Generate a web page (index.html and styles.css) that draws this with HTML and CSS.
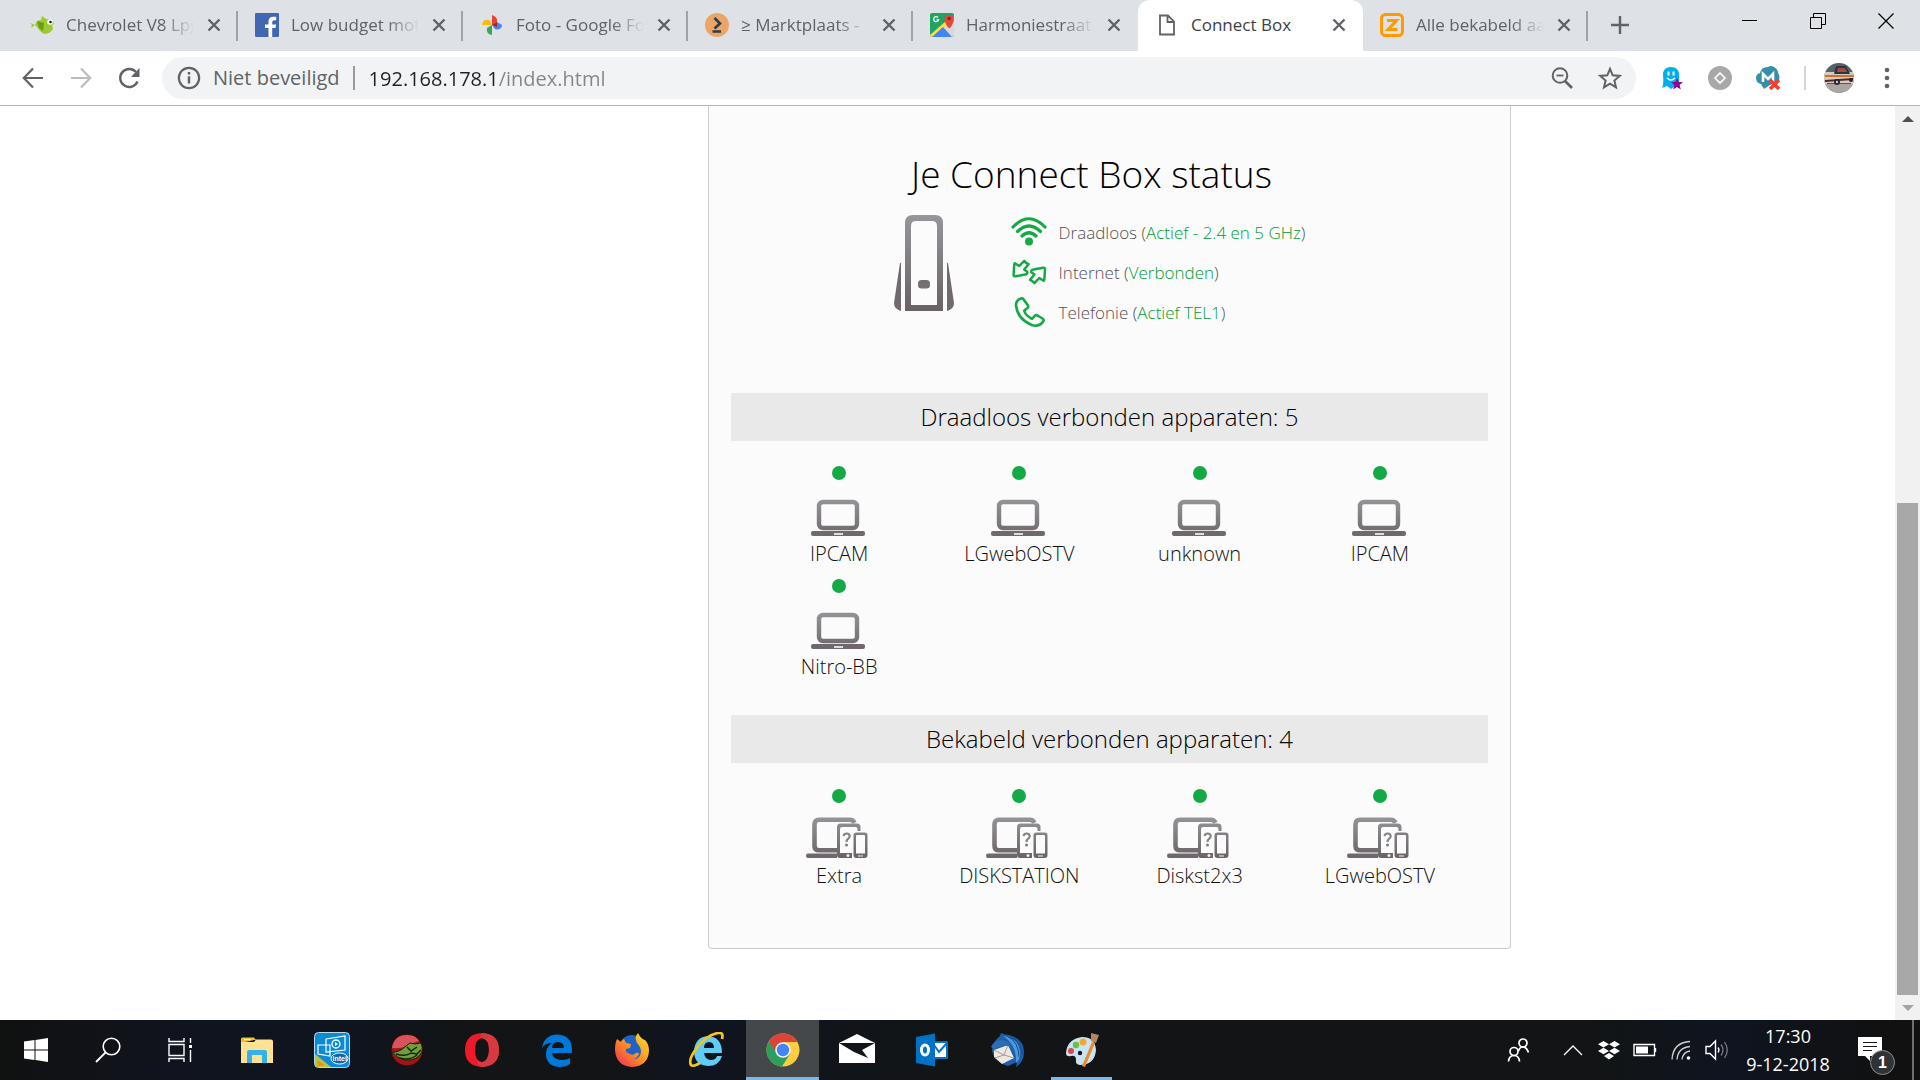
FILE: index.html
```html
<!DOCTYPE html>
<html lang="nl">
<head>
  <meta charset="UTF-8" />
  <meta name="viewport" content="width=device-width, initial-scale=1.0" />
  <title>Connect Box</title>
  <link rel="stylesheet" href="styles.css">
</head>
<body>

  <!-- Shared icons -->
  <svg class="defs" aria-hidden="true">
    <defs>
      <linearGradient id="grey" gradientUnits="userSpaceOnUse" x1="0" y1="0" x2="0" y2="40">
        <stop offset="0" stop-color="#949599" /><stop offset="1" stop-color="#6b6368" />
      </linearGradient>
      <symbol id="close" viewBox="0 0 14 14">
        <path d="M1.5 1.5l11 11M12.5 1.5l-11 11" stroke="#5f6368" stroke-width="2.4" />
      </symbol>
      <symbol id="laptop" viewBox="0 0 56 38">
        <rect x="8" y="3" width="38" height="26" rx="4" fill="none" stroke="url(#grey)" stroke-width="4.4" />
        <rect x="0" y="32" width="54" height="5" rx="2" fill="#6f686d" />
        <rect x="23" y="34" width="9" height="2" fill="#ddd" />
      </symbol>
      <symbol id="devices" viewBox="0 0 62 42">
        <path d="M32 33.200H13q-4.500 0-4.500-4.500V7q0-4.200 4.500-4.200h31q3 0 4.500 3" fill="none" stroke="url(#grey)" stroke-width="4.600" />
        <path d="M2 36.500h29V41H2q-2 0-2-2.200t2-2.300z" fill="#6f686d" />
        <path d="M46 41H34q-3 0-3-3V10q0-3.500 3.500-3.500h16.500q3.500 0 3.500 3.500v4h-3V12q0-2-2-2H36q-2 0-2 2v24h12z" fill="url(#grey)" />
        <circle cx="42" cy="38.500" r="1.500" fill="#eee" />
        <path d="M37.500 19q.5-2.500 3.200-2.500 3 0 3 2.700 0 1.600-1.900 3-1.300 1-1.300 2.800" fill="none" stroke="#858588" stroke-width="2.200" />
        <circle cx="40.500" cy="28" r="1.500" fill="#7c7a7d" />
        <path d="M50.500 15.500h8q3 0 3 3V38q0 3-3 3h-8q-3 0-3-3V18.500q0-3 3-3zm-.500 3.500v17.500h9V19q0-1-1-1h-7q-1 0-1 1z" fill="url(#grey)" fill-rule="evenodd" />
        <path d="M52 39h5" stroke="#ddd" stroke-width="1.200" />
      </symbol>
    </defs>
  </svg>

  <header class="browser">
    <div class="tabstrip">
      <nav class="tabs" aria-label="Tabbladen">
        <div class="tab">
          <svg class="favicon" viewBox="0 0 24 24"><path d="M0 10l5 2 2-4 4-1 1-4 4 3q7 0 8 5l-2 1 1 4q-3 5-9 5l-4-3-3-4-2-2-4 3 1-3z" fill="#9bcb2d"/><path d="M7 8l7 2-1 8-4-3z" fill="#6d9c1d"/><circle cx="20" cy="9" r="2.800" fill="#fff"/><circle cx="20.500" cy="9" r="1.300" fill="#222"/></svg>
          <a href="#">Chevrolet V8 Lpg</a>
          <button type="button" aria-label="Sluiten"><svg><use href="#close"/></svg></button>
        </div>
        <div class="tab">
          <svg class="favicon" viewBox="0 0 24 24"><rect width="24" height="24" rx="1" fill="#4267b2"/><path d="M13.500 24v-9H10v-3.600h3.500V8.500q0-4.700 4.700-4.700h3V7.300h-2q-2 0-2 2v2.100h3.900l-.6 3.600h-3.300v9z" fill="#fff"/></svg>
          <a href="#">Low budget mot</a>
          <button type="button" aria-label="Sluiten"><svg><use href="#close"/></svg></button>
        </div>
        <div class="tab">
          <svg class="favicon" viewBox="0 0 24 24"><path d="M12 12V2q6 2 5 7z" fill="#ea4335"/><path d="M12 12l5-3 5 3v1q-2 5-7 3z" fill="#4285f4"/><path d="M12 12v10q-6-1-5-7z" fill="#34a853"/><path d="M12 12H2q1-6 7-5z" fill="#fbbc04"/><path d="M12 12l5-3v5z" fill="#a52714"/></svg>
          <a href="#">Foto - Google Fo</a>
          <button type="button" aria-label="Sluiten"><svg><use href="#close"/></svg></button>
        </div>
        <div class="tab">
          <svg class="favicon" viewBox="0 0 24 24"><circle cx="12" cy="12" r="12" fill="#eda566"/><path d="M9.500 5l5.500 5.500-5.500 5M7.500 18.500h8.500" fill="none" stroke="#2d3c4d" stroke-width="2.600"/></svg>
          <a href="#">≥ Marktplaats -</a>
          <button type="button" aria-label="Sluiten"><svg><use href="#close"/></svg></button>
        </div>
        <div class="tab">
          <svg class="favicon" viewBox="0 0 24 24"><rect width="24" height="24" rx="2" fill="#1fa463"/><path d="M2 24L24 4v18q0 2-2 2z" fill="#d8d8d8"/><path d="M0 22L16 8l2 4L4 24H2q-2 0-2-2z" fill="#ffdc48"/><path d="M2 24l11-10 9 10z" fill="#4285f4"/><path d="M18.500 15q-4-5-4-9.500a5 5 0 0 1 9.500 0q0 4.500-4 9.500z" fill="#e8453c"/><circle cx="19.200" cy="5.500" r="1.800" fill="#8c231b"/><path d="M8 4.500A2.500 2.500 0 1 0 8.500 7H6.500" fill="none" stroke="#fff" stroke-width="1.300"/></svg>
          <a href="#">Harmoniestraat</a>
          <button type="button" aria-label="Sluiten"><svg><use href="#close"/></svg></button>
        </div>
        <div class="tab active">
          <svg class="favicon" viewBox="0 0 24 24"><path d="M5 2.500h8l6 6V21.500H5zM12.500 2.500V9H19" fill="none" stroke="#5f6368" stroke-width="1.800"/></svg>
          <a href="#">Connect Box</a>
          <button type="button" aria-label="Sluiten"><svg><use href="#close"/></svg></button>
        </div>
        <div class="tab">
          <svg class="favicon" viewBox="0 0 24 24"><rect x="1.500" y="1.500" width="21" height="21" rx="4" fill="none" stroke="#ff9a00" stroke-width="3"/><path d="M7 7.500h9.500L8 16.500h9.500" fill="none" stroke="#ff9a00" stroke-width="3"/></svg>
          <a href="#">Alle bekabeld aa</a>
          <button type="button" aria-label="Sluiten"><svg><use href="#close"/></svg></button>
        </div>
        <button class="new-tab" type="button" aria-label="Nieuw tabblad"><svg viewBox="0 0 18 18"><path d="M9 0v18M0 9h18" stroke="#5f6368" stroke-width="2.400"/></svg></button>
      </nav>
      <div class="window-buttons">
        <button type="button" aria-label="Minimaliseren"><svg viewBox="0 0 16 16"><path d="M0 7.500h15" stroke="#000"/></svg></button>
        <button type="button" aria-label="Verkleinen"><svg viewBox="0 0 16 16"><path d="M.5 4.500h11v11H.5zM3.500 4V.5h12v11H12" fill="none" stroke="#000"/></svg></button>
        <button type="button" aria-label="Venster sluiten"><svg viewBox="0 0 16 16"><path d="M.5 .5l15 15M15.500 .5l-15 15" stroke="#000" stroke-width="1.200"/></svg></button>
      </div>
    </div>

    <div class="toolbar">
      <div class="nav-buttons">
        <button type="button" aria-label="Terug"><svg viewBox="0 0 24 24"><path d="M22 12H3M12 2.500L2.800 12l9.200 9.500" fill="none" stroke="#5f6368" stroke-width="2.200"/></svg></button>
        <button type="button" aria-label="Vooruit" disabled><svg viewBox="0 0 24 24"><path d="M2 12h19M12 2.500l9.200 9.500-9.200 9.500" fill="none" stroke="#babcbe" stroke-width="2.200"/></svg></button>
        <button type="button" aria-label="Vernieuwen"><svg viewBox="0 0 24 24"><path d="M20.500 15.500A9 9 0 1 1 19 6" fill="none" stroke="#5f6368" stroke-width="2.400"/><path d="M22.500 2v9H14z" fill="#5f6368"/></svg></button>
      </div>
      <div class="omnibox">
        <svg class="info" viewBox="0 0 22 22"><circle cx="11" cy="11" r="9.300" fill="none" stroke="#5f6368" stroke-width="2"/><path d="M11 9.500v6.500M11 5.500v2.300" stroke="#5f6368" stroke-width="2.200"/></svg>
        <label for="url">Niet beveiligd</label>
        <input id="url" type="text" value="192.168.178.1/index.html" spellcheck="false">
        <button type="button" aria-label="Zoomen"><svg viewBox="0 0 24 24"><circle cx="10" cy="9.500" r="7.300" fill="none" stroke="#5f6368" stroke-width="2"/><path d="M6.500 9.500h7" stroke="#5f6368" stroke-width="1.800"/><path d="M15 15l7 7" stroke="#5f6368" stroke-width="2.600"/></svg></button>
        <button type="button" aria-label="Bladwijzer"><svg viewBox="0 0 24 24"><path d="M12 2.800l2.700 6.500 7 .6-5.300 4.600 1.600 6.800-6-3.600-6 3.600 1.600-6.800L2.300 9.900l7-.6z" fill="none" stroke="#5f6368" stroke-width="2"/></svg></button>
      </div>
      <div class="extensions">
        <button type="button" aria-label="Ghostery"><svg viewBox="0 0 24 24"><path d="M3 9Q3 1 11 1t8 8v13l-4-2-4 3-4-3-5 2q2-4 1-13z" fill="#00aef0"/><path d="M8.500 5.500v4M13.500 5.500v4" stroke="#fff" stroke-width="2"/><path d="M7 12q4 4 8 0" fill="none" stroke="#fff" stroke-width="1.500"/><path d="M17 12l1.600 4 4.400.3-3.400 2.800 1.200 4.400-3.800-2.400-3.800 2.400 1.200-4.400-3.400-2.800 4.400-.3z" fill="#930095"/></svg></button>
        <button type="button" aria-label="Extensie"><svg viewBox="0 0 24 24"><circle cx="12" cy="12" r="12" fill="#a8a8a8"/><path d="M12 7l5 5-5 5-5-5z" fill="none" stroke="#fff" stroke-width="1.700"/></svg></button>
        <button type="button" aria-label="MeldMij"><svg viewBox="0 0 24 24"><path d="M5 18q-5-1-5-6 0-4 4-5 1-6 8-6 3-2 6 0 4 2 4 6 3 4 0 9l-8 3-6 4z" fill="#3390a8"/><path d="M7 16V8l5 5 5-5v8" fill="none" stroke="#fff" stroke-width="2.600"/><path d="M14 14l9 9M23 14l-9 9" stroke="#fb3c2a" stroke-width="3.500"/></svg></button>
      </div>
      <div class="profile">
        <button type="button" aria-label="Profiel"><svg viewBox="0 0 30 30"><clipPath id="round"><circle cx="15" cy="15" r="15"/></clipPath><g clip-path="url(#round)"><path fill="#55606b" d="M0 0h30v30H0z"/><path fill="#d9cabd" d="M0 9h30v13H0z"/><path fill="#a9a6a3" d="M0 21h30v9H0z"/><path d="M12 3h10l4 8H10z" fill="#293545"/><path d="M14 5h7l2 4H13z" fill="#a64a40"/><path d="M1 12h29v2H1z" fill="#cc732b"/><path d="M1 17l28-2v2L1 19z" fill="#4d2b2e"/><path d="M3 20h24v1H3z" fill="#a43a25"/><circle cx="13" cy="19" r="3" fill="#292033"/><circle cx="13" cy="19" r="1.200" fill="#ccc"/><circle cx="27" cy="17" r="2" fill="#292033"/></g></svg></button>
        <button type="button" aria-label="Menu"><svg viewBox="0 0 30 30"><circle cx="15" cy="7" r="2.300" fill="#5f6368"/><circle cx="15" cy="15" r="2.300" fill="#5f6368"/><circle cx="15" cy="23" r="2.300" fill="#5f6368"/></svg></button>
      </div>
    </div>
  </header>

  <div class="viewport">
    <main class="page">
      <section class="card">
        <h1>Je Connect Box status</h1>
        <div class="status">
          <svg class="router" viewBox="0 0 60 97">
            <linearGradient id="body" x1="0" y1="0" x2="0" y2="1"><stop offset="0" stop-color="#96979b"/><stop offset="1" stop-color="#696165"/></linearGradient>
            <path d="M19 0h22q8 0 8 8v88H11V8q0-8 8-8zm3 6q-5 0-5 5v79h26V11q0-5-5-5z" fill="url(#body)" fill-rule="evenodd"/>
            <rect x="24" y="65" width="12" height="8.500" rx="3.500" fill="#746f73"/>
            <path d="M6 48h1v48q-7-2-7-8zM54 48h-1v48q7-2 7-8z" fill="#70696d"/>
          </svg>
          <ul>
            <li>
              <svg viewBox="0 0 36 32"><g fill="none" stroke="#14a944" stroke-width="3.200" stroke-linecap="round"><path d="M2 11Q18-5.500 34 11M6.500 15.500q11.500-11 23 0M11 20q7-6.500 14 0"/></g><circle cx="18" cy="25.500" r="4" fill="#14a944"/></svg>
              <span>Draadloos (<b>Actief - 2.4 en 5 GHz</b>)</span>
            </li>
            <li>
              <svg viewBox="0 0 36 32"><g fill="none" stroke="#14a944" stroke-width="2.500" stroke-linejoin="round"><path id="arrow" d="M4 7.300l4.300 2.700 5-5.200q1.200 2 4.200 3.400l-4.300 5.300 3 2.200q.5 2.600-2 2.900l-9.700 1.700q-2 .3-1.900-1.600l.6-9.800q.1-1.500.8-1.600z"/><use href="#arrow" transform="rotate(180 18.300 16)"/></g></svg>
              <span>Internet (<b>Verbonden</b>)</span>
            </li>
            <li>
              <svg viewBox="0 0 36 32"><path d="M10 2.500q-5 1.500-5 7 1.500 13.500 15.500 19.500 8 2.500 12-4 .5-1.500-1-2.500l-5-3q-2-1-3 .5l-2 2.500q-1 .5-2-.5-5-3-6-6.500-.5-1 .5-1.500l2.500-2q1-1 .5-2.500L13 4q-1-2-3-1.500z" fill="none" stroke="#14a944" stroke-width="2.600" stroke-linejoin="round"/></svg>
              <span>Telefonie (<b>Actief TEL1</b>)</span>
            </li>
          </ul>
        </div>

        <h2>Draadloos verbonden apparaten: 5</h2>
        <ul class="devices">
          <li><i></i><svg><use href="#laptop"/></svg><span>IPCAM</span></li>
          <li><i></i><svg><use href="#laptop"/></svg><span>LGwebOSTV</span></li>
          <li><i></i><svg><use href="#laptop"/></svg><span>unknown</span></li>
          <li><i></i><svg><use href="#laptop"/></svg><span>IPCAM</span></li>
          <li><i></i><svg><use href="#laptop"/></svg><span>Nitro-BB</span></li>
        </ul>

        <h2>Bekabeld verbonden apparaten: 4</h2>
        <ul class="devices wired">
          <li><i></i><svg><use href="#devices"/></svg><span>Extra</span></li>
          <li><i></i><svg><use href="#devices"/></svg><span>DISKSTATION</span></li>
          <li><i></i><svg><use href="#devices"/></svg><span>Diskst2x3</span></li>
          <li><i></i><svg><use href="#devices"/></svg><span>LGwebOSTV</span></li>
        </ul>
      </section>
    </main>
    <div class="scrollbar">
      <button type="button" aria-label="Omhoog"><svg viewBox="0 0 12 6"><path d="M0 6l6-6 6 6z" fill="#505050"/></svg></button>
      <div class="track"><div class="thumb"></div></div>
      <button type="button" aria-label="Omlaag"><svg viewBox="0 0 12 6"><path d="M0 0l6 6 6-6z" fill="#a3a3a3"/></svg></button>
    </div>
  </div>

  <footer class="taskbar">
    <div class="system">
      <button type="button" aria-label="Start"><svg viewBox="0 0 36 36"><path d="M6 9.500l10.500-1.500v9.500H6zM17.500 7.900L30 6v11.500H17.500zM6 18.500h10.500V28L6 26.500zM17.500 18.500H30V30l-12.500-1.900z" fill="#fff"/></svg></button>
      <button type="button" aria-label="Zoeken"><svg viewBox="0 0 36 36"><circle cx="21.500" cy="14.500" r="8.300" fill="none" stroke="#fff" stroke-width="1.600"/><path d="M15.500 20.500L6 30" stroke="#fff" stroke-width="1.800"/></svg></button>
      <button type="button" aria-label="Taakweergave"><svg viewBox="0 0 36 36"><path d="M7 6v3.500h15V6M7 30v-3.500h15V30M7 12.500h15v11H7zM28.500 6v5M28.500 18v12" fill="none" stroke="#fff" stroke-width="1.400"/><path d="M27 13h3v3h-3z" fill="#fff"/></svg></button>
    </div>
    <div class="apps">
      <button type="button" aria-label="Verkenner"><svg viewBox="0 0 36 36"><path d="M2 7q0-1.500 1.500-1.500H15L17 8h-2L2 11z" fill="#f5b92d"/><path d="M5 7.500h7" stroke="#fff" stroke-width="1.200"/><path d="M2 10h13l2-2.500h15q2 0 2 2V31H2z" fill="#ffe292"/><path d="M8 31V20q0-2 2-2h16q2 0 2 2v11h-5v-8H13v8z" fill="#34b1ea"/></svg></button>
      <button type="button" aria-label="Intel"><svg viewBox="0 0 36 36"><rect x=".5" y=".5" width="35" height="35" rx="4" fill="#0a8bd6" stroke="#bcd9e8"/><path d="M1 22l16 13H4q-3 0-3-3z" fill="#b9c63b"/><path d="M3 28l8 5-7 1z" fill="#ef8a24"/><path d="M12 7l19-3v14l-19 2zM4 13h12v11L4 22z" fill="none" stroke="#fff" stroke-width="1.200"/><circle cx="22" cy="12" r="4" fill="none" stroke="#fff" stroke-width="1.300"/><path d="M21 10l3 2-3 2z" fill="#fff"/><ellipse cx="25.500" cy="26.500" rx="8.500" ry="5.500" fill="#0868b0" stroke="#fff"/><text x="18.500" y="29" class="intel">intel</text></svg></button>
      <button type="button" aria-label="Kikker"><svg viewBox="0 0 36 36"><circle cx="18" cy="18" r="16" fill="#9d151b" stroke="#2c0a0a"/><path d="M3 16Q5 3 18 3q9 0 12 6l-12 4q-4 4-15 3z" fill="#d8545a"/><path d="M17 14l4-3 5 1 6-1q2 4 1 9-5 9-17 8Q8 26 3 20q7 1 14-6z" fill="#6fa03a" stroke="#16240d"/><path d="M7 22q10 3 15-1l6 1 4-4M18 15l4 4 6-4M11 26q9 3 17-3" fill="none" stroke="#16240d" stroke-width="1.500"/></svg></button>
      <button type="button" aria-label="Opera"><svg viewBox="0 0 36 36"><path d="M18 1q17 1 17 17T18 35Q1 34 1 18T18 1zm0 5q-7 1-7 12t7 12q7-1 7-12T18 6z" fill="#f0192c" fill-rule="evenodd"/><path d="M18 1q17 1 17 17T18 35q-4-1-5-7 4 4 8 1 4-4 4-11 0-12-9-12z" fill="#d63a40"/></svg></button>
      <button type="button" aria-label="Edge"><svg viewBox="0 0 36 36"><path d="M3 16Q5 3 18 2.500 33 3 33 18v3H13q1 7 10 7 5 0 8-2v6q-4 3-11 3Q7 34 7 22q0-7 6-11Q6 11 3 16zm10 0h12q0-6-6-6t-6 6z" fill="#0078d7" fill-rule="evenodd"/></svg></button>
      <button type="button" aria-label="Firefox"><svg viewBox="0 0 36 36"><defs><linearGradient id="fox" x1="1" y1="0" x2="0" y2="1"><stop offset="0" stop-color="#ffe23a"/><stop offset=".45" stop-color="#ff9b1c"/><stop offset="1" stop-color="#f0245c"/></linearGradient></defs><circle cx="18" cy="16" r="13" fill="#1f62c8"/><path d="M3 7l4 3q2-3 3-3l2 4 5 1-1 4-4 1v3l4 2q3 2 6-1 3-1 3 1-2 5-7 5 8 1 9-7 0-5-4-9-3-6 1-10 3 6 7 7 4 4 4 11-1 15-17 16Q2 34 1 18 1 11 3 7z" fill="url(#fox)"/></svg></button>
      <button type="button" aria-label="Internet Explorer"><svg viewBox="0 0 36 36"><path d="M5 19Q6 5 19 4q14 1 14 17H15q1 7 7 7 5 0 6-4h5q-3 10-14 10Q5 33 5 19zm10-3h10q0-6-5-6t-5 6z" fill="#5fcdf5" fill-rule="evenodd"/><path d="M11 31q-7 4-9 2Q-1 28 7 17 17 3 29 1q6-1 4 6" fill="none" stroke="#f5c51c" stroke-width="2.700"/></svg></button>
      <button class="current" type="button" aria-label="Chrome"><svg viewBox="0 0 36 36"><circle cx="18" cy="18" r="16.500" fill="#ffcd40"/><path d="M18 18L3.700 9.500A16.500 16.500 0 0 0 17 34.500L25 22z" fill="#2c9f5d"/><path d="M18 10h14.500A16.500 16.500 0 0 0 4 9.200L11 21z" fill="#db4437"/><circle cx="18" cy="18" r="7.800" fill="#f1f1f1"/><circle cx="18" cy="18" r="6.200" fill="#4285f4"/></svg></button>
      <button type="button" aria-label="Mail"><svg viewBox="0 0 36 36"><path d="M0 11l18-9 18 9v20H0zM0 11l15 9 14 6-6-8 13-7z" fill="#fff" fill-rule="evenodd"/></svg></button>
      <button type="button" aria-label="Outlook"><svg viewBox="0 0 36 36"><path d="M18 9h15q1 0 1 1v16q0 1-1 1H18z" fill="#0072c6"/><path d="M20 11h12v14H20z" fill="#fff"/><path d="M20 13l5 7 8-9" fill="none" stroke="#0072c6" stroke-width="2"/><path d="M2 5l19-3.500v33L2 31z" fill="#0072c6"/><ellipse cx="11" cy="18" rx="3.500" ry="5" fill="none" stroke="#fff" stroke-width="3"/></svg></button>
      <button type="button" aria-label="Thunderbird"><svg viewBox="0 0 36 36"><path d="M11 4l1-3q4 2 8 2 15 4 15 17 0 10-8 15l1-5-9 4Q5 30 3 19q0-9 8-15z" fill="#1f5fa9"/><path d="M14 4q15 2 17 15 1 8-4 12 1-18-13-27z" fill="#4a9bdd"/><path d="M22 5q11 5 11 17M18 4q12 6 12 21" fill="none" stroke="#16498c"/><path d="M5 18l14-5 6 13-12 6-8-7z" fill="#eee8e0"/><path d="M5 18l10 5 4-10M6 26l9-3 10 3" fill="none" stroke="#a39c96"/><path d="M2 15Q7 4 19 10l3 5-7-2-10 4z" fill="#2c6db5"/></svg></button>
      <button class="open" type="button" aria-label="Paint"><svg viewBox="0 0 36 36"><path d="M2 21Q3 7 18 5q13 0 14 13-1 14-15 15-6 0-5-5 0-5-5-4-5 1-5-3z" fill="#c8e4f4"/><circle cx="7" cy="19" r="3" fill="#d94a3d"/><circle cx="12" cy="13" r="3.200" fill="#6bbf46"/><circle cx="19" cy="10" r="3.500" fill="#f7a72b"/><circle cx="16" cy="21" r="2.200" fill="#14171c"/><path d="M28 10l3 1-10 24-3-1z" fill="#ea8b2f"/><path d="M27 1l8 2-3 8-5-2z" fill="#b58661"/></svg></button>
    </div>
    <div class="tray">
      <button type="button" aria-label="Personen"><svg viewBox="0 0 24 24"><g fill="none" stroke="#fff" stroke-width="1.700"><circle cx="16" cy="5" r="4"/><path d="M11.500 13q1-4 4.500-4t5.500 5.500"/><circle cx="7" cy="13.500" r="4"/><path d="M1.500 23.500Q2 17.500 7 17.500t5.500 6"/></g></svg></button>
      <button type="button" aria-label="Verborgen pictogrammen"><svg viewBox="0 0 24 24"><path d="M3 17l9-9 9 9" fill="none" stroke="#fff" stroke-width="1.400"/></svg></button>
      <button type="button" aria-label="Dropbox"><svg viewBox="0 0 24 24"><path d="M6.500 3l5.500 3.200-5.500 3.300L1 6.200zM17.500 3L23 6.200l-5.500 3.300L12 6.200zM6.500 9.800l5.500 3.300-5.500 3.200L1 13.100zM17.500 9.800l5.500 3.300-5.500 3.200-5.500-3.200zM12 15l5 3-5 3.500L7 18z" fill="#fff"/></svg></button>
      <button type="button" aria-label="Batterij"><svg viewBox="0 0 24 24"><path d="M1 6.500h20.500v11H1zM22.500 10v4" fill="none" stroke="#fff" stroke-width="1.400"/><path d="M3 8.500h12v7H3z" fill="#fff"/></svg></button>
      <button type="button" aria-label="Netwerk"><svg viewBox="0 0 24 24"><g fill="none" stroke="#fff" stroke-width="1.300"><path d="M3 21.500Q4 4.500 21 3.500M8 21.500Q9 9.500 21 8.500M13 21.500q1-7.500 8-8.500" opacity=".8"/></g><circle cx="19.500" cy="20" r="1.800" fill="#fff"/></svg></button>
      <button type="button" aria-label="Volume"><svg viewBox="0 0 24 24"><path d="M1 8.500h4l5.500-5.500v18L5 15.500H1z" fill="none" stroke="#fff" stroke-width="1.400"/><path d="M13 9.500q2 2.500 0 5" fill="none" stroke="#fff" stroke-width="1.300"/><path d="M16 6.500q4 5.500 0 11M19.500 4q5.500 8 0 16" fill="none" stroke="#777b82" stroke-width="1.300"/></svg></button>
      <time datetime="2018-12-09T17:30"><span>17:30</span><span>9-12-2018</span></time>
      <button class="notice" type="button" aria-label="Meldingen"><svg viewBox="0 0 24 26"><path d="M0 0h24v19H12v5l-5-5H0z" fill="#fff"/><path d="M5 5.500h14M5 9.500h14M5 13.500h9" stroke="#14171c" stroke-width="1.200"/></svg><span class="badge">1</span></button>
      <div class="show-desktop"></div>
    </div>
  </footer>

</body>
</html>
```
FILE: styles.css
```css
* {
  box-sizing: border-box;
  margin: 0;
  padding: 0;
}

body {
  font-family: 'Open Sans', 'Noto Sans', sans-serif;
  background: #fff;
  min-height: 100vh;
  display: flex;
  flex-direction: column;
}

ul {
  list-style: none;
}

svg {
  display: block;
  flex: none;
}

button {
  background: none;
  border: none;
  display: flex;
  align-items: center;
  justify-content: center;
}

.defs {
  position: absolute;
  width: 0;
  height: 0;
}

/* --- Browser --- */
.tabstrip {
  display: flex;
  justify-content: space-between;
  height: 51px;
  padding-left: 13px;
  background: #dee1e6;
}

.tabs {
  display: flex;
  flex: 1;
  min-width: 0;
}

.tab {
  display: flex;
  align-items: center;
  flex: 0 1 225px;
  min-width: 0;
  padding: 0 16px 2px 17px;
  background: linear-gradient(#a0a3a7, #a0a3a7) right 11px / 2px 30px no-repeat;
}

.tab .favicon {
  width: 24px;
  height: 24px;
  margin-right: 12px;
}

.tab a {
  flex: 1;
  overflow: hidden;
  white-space: nowrap;
  font-size: 17px;
  color: #5f6368;
  text-decoration: none;
  mask-image: linear-gradient(to right, #000 75%, transparent);
}

.tab button {
  width: 16px;
  height: 24px;
  margin-left: 12px;
}

.tab button svg {
  width: 14px;
  height: 14px;
}

.tab.active {
  background: #fff;
  border-radius: 12px 12px 0 0;
}

.tab.active a {
  color: #3c4043;
  mask-image: none;
}

.tab:nth-child(5) {
  background: none;
}

.new-tab {
  width: 64px;
  padding-bottom: 2px;
}

.new-tab svg {
  width: 18px;
  height: 18px;
}

.window-buttons {
  display: flex;
}

.window-buttons button {
  width: 68px;
  height: 42px;
}

.window-buttons svg {
  width: 16px;
  height: 16px;
}

.toolbar {
  display: flex;
  align-items: center;
  height: 55px;
  border-bottom: 1px solid #b6b4b6;
  padding: 0 18px 0 9px;
}

.nav-buttons {
  display: flex;
  margin-right: 9px;
}

.nav-buttons button {
  width: 48px;
  height: 40px;
}

.toolbar svg {
  width: 24px;
  height: 24px;
}

.omnibox {
  display: flex;
  align-items: center;
  flex: 1;
  height: 42px;
  padding: 0 14px 0 15px;
  border-radius: 21px;
  background: #f1f3f4;
  font-size: 20px;
}

.omnibox label {
  padding: 0 13px 0 12px;
  border-right: 2px solid #96999d;
  line-height: 24px;
  color: #5f6368;
}

.omnibox input {
  flex: 1;
  min-width: 0;
  margin-left: 14px;
  border: none;
  outline: none;
  font: inherit;
  /* host dark, path grey */
  background: linear-gradient(to right, #202124 128px, #80868b 128px);
  background-clip: text;
  -webkit-background-clip: text;
  color: transparent;
}

.omnibox button {
  width: 48px;
  height: 40px;
}

.omnibox button:last-child {
  width: 24px;
  margin-left: 12px;
}

.extensions {
  display: flex;
  gap: 24px;
  padding: 0 24px;
}

.profile {
  display: flex;
  align-items: center;
  border-left: 2px solid #d3d5d8;
  height: 24px;
  padding-left: 18px;
  gap: 18px;
}

.profile svg {
  width: 30px;
  height: 30px;
}

/* --- Page --- */
.viewport {
  flex: 1;
  display: flex;
}

.page {
  flex: 1;
  display: flex;
  justify-content: flex-end;
  max-width: 1127px;
  margin: 0 auto;
}

.card {
  width: 100%;
  max-width: 803px;
  align-self: flex-start;
  padding: 44px 22px 36px;
  background: #fbfbfb;
  border: 1px solid #ccc;
  border-top: none;
  border-radius: 0 0 4px 4px;
}

.card h1 {
  padding-right: 36px;
  font-size: 37px;
  font-weight: 300;
  line-height: 48px;
  text-align: center;
  color: #000;
}

.status {
  display: flex;
  justify-content: center;
  gap: 57px;
  padding: 14px 20px 61px 0;
}

.router {
  width: 60px;
  height: 97px;
  margin-top: 3px;
}

.status li {
  display: flex;
  align-items: center;
  gap: 12px;
  height: 40px;
  font-size: 17px;
  font-weight: 300;
  color: #564f53;
}

.status li svg {
  width: 36px;
  height: 32px;
}

.status b {
  font-weight: inherit;
  color: #009c31;
}

.card h2 {
  background: #e9e9e9;
  font-size: 24px;
  font-weight: 300;
  line-height: 48px;
  text-align: center;
  color: #000;
}

.devices {
  display: grid;
  grid-template-columns: repeat(4, 1fr);
  padding: 25px 18px 23px;
}

.devices li {
  display: flex;
  flex-direction: column;
  align-items: center;
  height: 113px;
  font-size: 20px;
  font-weight: 300;
  color: #111;
}

.devices i {
  width: 14px;
  height: 14px;
  border-radius: 50%;
  background: #14a944;
}

.devices svg {
  width: 56px;
  height: 38px;
  margin: 19px 0 4px;
}

.devices span {
  line-height: 26px;
}

.devices.wired {
  padding: 26px 18px 10px;
}

.wired svg {
  width: 62px;
  height: 42px;
  margin: 14px 4px 4px 0;
}

.scrollbar {
  display: flex;
  flex-direction: column;
  width: 25px;
  background: #f1f1f1;
}

.scrollbar button {
  height: 25px;
}

.scrollbar svg {
  width: 12px;
  height: 6px;
}

.track {
  flex: 1;
  display: flex;
  flex-direction: column;
  justify-content: flex-end;
  padding: 0 2px;
}

.thumb {
  height: 57%;
  background: #a8a8a8;
}

/* --- Taskbar --- */
.taskbar {
  display: flex;
  height: 60px;
  background: linear-gradient(to right, #101111, #10141f 10%, #10141f 18%, #121415 24%, #121415 31%, #10141f 37%, #121415 50%, #121415 83%, #0f1420 90%, #111 98%);
  color: #fff;
}

.system,
.apps {
  display: flex;
}

.system button {
  width: 72px;
}

.apps {
  margin-left: 3px;
}

.apps button {
  width: 75px;
}

.system svg,
.apps svg {
  width: 36px;
  height: 36px;
}

.apps .current {
  width: 73px;
  margin-left: 2px;
  background: linear-gradient(#76b9ed, #76b9ed) bottom / 100% 3px no-repeat #45484b;
}

.apps .open {
  background: linear-gradient(#76b9ed, #76b9ed) bottom / 61px 3px no-repeat;
}

.intel {
  font-size: 7px;
  font-weight: 700;
  fill: #fff;
}

.tray {
  display: flex;
  align-items: center;
  margin-left: auto;
}

.tray button {
  width: 36px;
  height: 60px;
}

.tray button:first-child {
  width: 72px;
}

.tray svg {
  width: 24px;
  height: 24px;
}

.tray time {
  display: flex;
  flex-direction: column;
  width: 106px;
  font-size: 18px;
  line-height: 28px;
  text-align: center;
}

.tray .notice {
  position: relative;
  width: 71px;
  padding-right: 13px;
}

.notice svg {
  height: 26px;
}

.badge {
  position: absolute;
  left: 29px;
  top: 30px;
  width: 25px;
  height: 25px;
  border: 1px solid #8b8e90;
  border-radius: 50%;
  background: #303336;
  color: #fff;
  font-size: 16px;
  font-weight: 600;
  line-height: 23px;
}

.show-desktop {
  width: 8px;
  height: 60px;
  border-left: 2px solid #6d6f72;
}
```
